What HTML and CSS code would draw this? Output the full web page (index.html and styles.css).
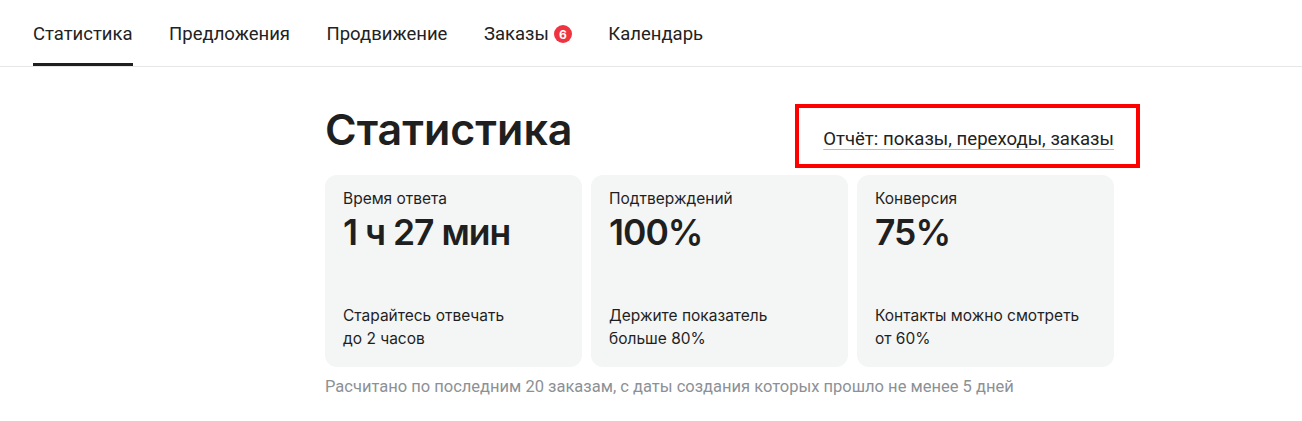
FILE: index.html
```html
<!DOCTYPE html>
<html lang="ru">
<head>
<meta charset="utf-8">
<link rel="stylesheet" href="styles.css">
</head>
<body>
<nav class="tabs">
  <a class="tab active">Статистика</a>
  <a class="tab">Предложения</a>
  <a class="tab">Продвижение</a>
  <a class="tab">Заказы <span class="badge">6</span></a>
  <a class="tab">Календарь</a>
</nav>
<main class="content">
  <div class="head">
    <h1 class="title">Статистика</h1>
    <span class="report-wrap"><a class="report">Отчёт: показы, переходы, заказы</a><span class="highlight"></span></span>
  </div>
  <div class="cards">
    <div class="card">
      <div class="label">Время ответа</div>
      <div class="value">1 ч 27 мин</div>
      <div class="hint">Старайтесь отвечать<br>до 2 часов</div>
    </div>
    <div class="card">
      <div class="label">Подтверждений</div>
      <div class="value">100%</div>
      <div class="hint">Держите показатель<br>больше 80%</div>
    </div>
    <div class="card">
      <div class="label">Конверсия</div>
      <div class="value">75%</div>
      <div class="hint">Контакты можно смотреть<br>от 60%</div>
    </div>
  </div>
  <p class="note">Расчитано по последним 20 заказам, с даты создания которых прошло не менее 5 дней</p>
</main>
</body>
</html>
```

FILE: styles.css
```css
* { box-sizing: border-box; }
body {
  margin: 0;
  background: #fff;
  color: #1f1f1f;
  font-family: Roboto, "Liberation Sans", sans-serif;
}
.tabs {
  display: flex;
  gap: 36.5px;
  padding: 0 33px;
  height: 67px;
  border-bottom: 1px solid #e6e6e6;
}
.tab {
  display: flex;
  align-items: center;
  font-size: 18.5px;
  color: #222;
  height: 67px;
  padding-top: 1px;
  position: relative;
  margin-bottom: -1px;
}
.tab.active::after {
  content: "";
  position: absolute;
  left: 0;
  right: 0;
  bottom: 1px;
  height: 3px;
  background: #1f1f1f;
}
.badge {
  display: inline-flex;
  align-items: center;
  justify-content: center;
  width: 18px;
  height: 18px;
  border-radius: 50%;
  background: #ef3340;
  color: #fff;
  font-family: Inter, sans-serif;
  font-weight: 700;
  font-size: 12px;
  margin-left: 5px;
}
.content {
  width: 789px;
  margin: 0 0 0 325px;
}
.head {
  display: flex;
  justify-content: space-between;
  align-items: flex-end;
  height: 108px;
  padding-bottom: 21px;
}
.title {
  margin: 0;
  font-family: Inter, sans-serif;
  font-weight: 600;
  font-size: 43px;
  line-height: 50px;
  letter-spacing: 0;
  color: #1f1f1f;
}
.report-wrap {
  position: relative;
  margin-bottom: 4px;
}
.report {
  font-size: 18.6px;
  color: #222;
  text-decoration: underline;
  text-decoration-color: #bdbdbd;
  text-underline-offset: 4px;
  text-decoration-thickness: 1px;
}
.highlight {
  position: absolute;
  left: -28px;
  right: -26px;
  top: -24px;
  bottom: -18px;
  border: 4px solid #ff0000;
}
.cards {
  display: grid;
  grid-template-columns: repeat(3, 1fr);
  gap: 9px;
}
.card {
  background: #f4f5f5;
  border-radius: 12px;
  height: 192px;
  padding: 13px 18px 0;
  display: flex;
  flex-direction: column;
  font-family: Inter, sans-serif;
}
.label {
  font-size: 15.5px;
  line-height: 22px;
  color: #1f1f1f;
}
.value {
  font-size: 35.5px;
  font-weight: 600;
  line-height: 46px;
  letter-spacing: -1px;
  color: #1f1f1f;
}
.hint {
  margin-top: auto;
  margin-bottom: 17px;
  font-size: 15.5px;
  line-height: 23px;
  color: #1f1f1f;
}
.note {
  margin: 10px 0 0;
  font-size: 16.5px;
  color: #8c9196;
}
```
